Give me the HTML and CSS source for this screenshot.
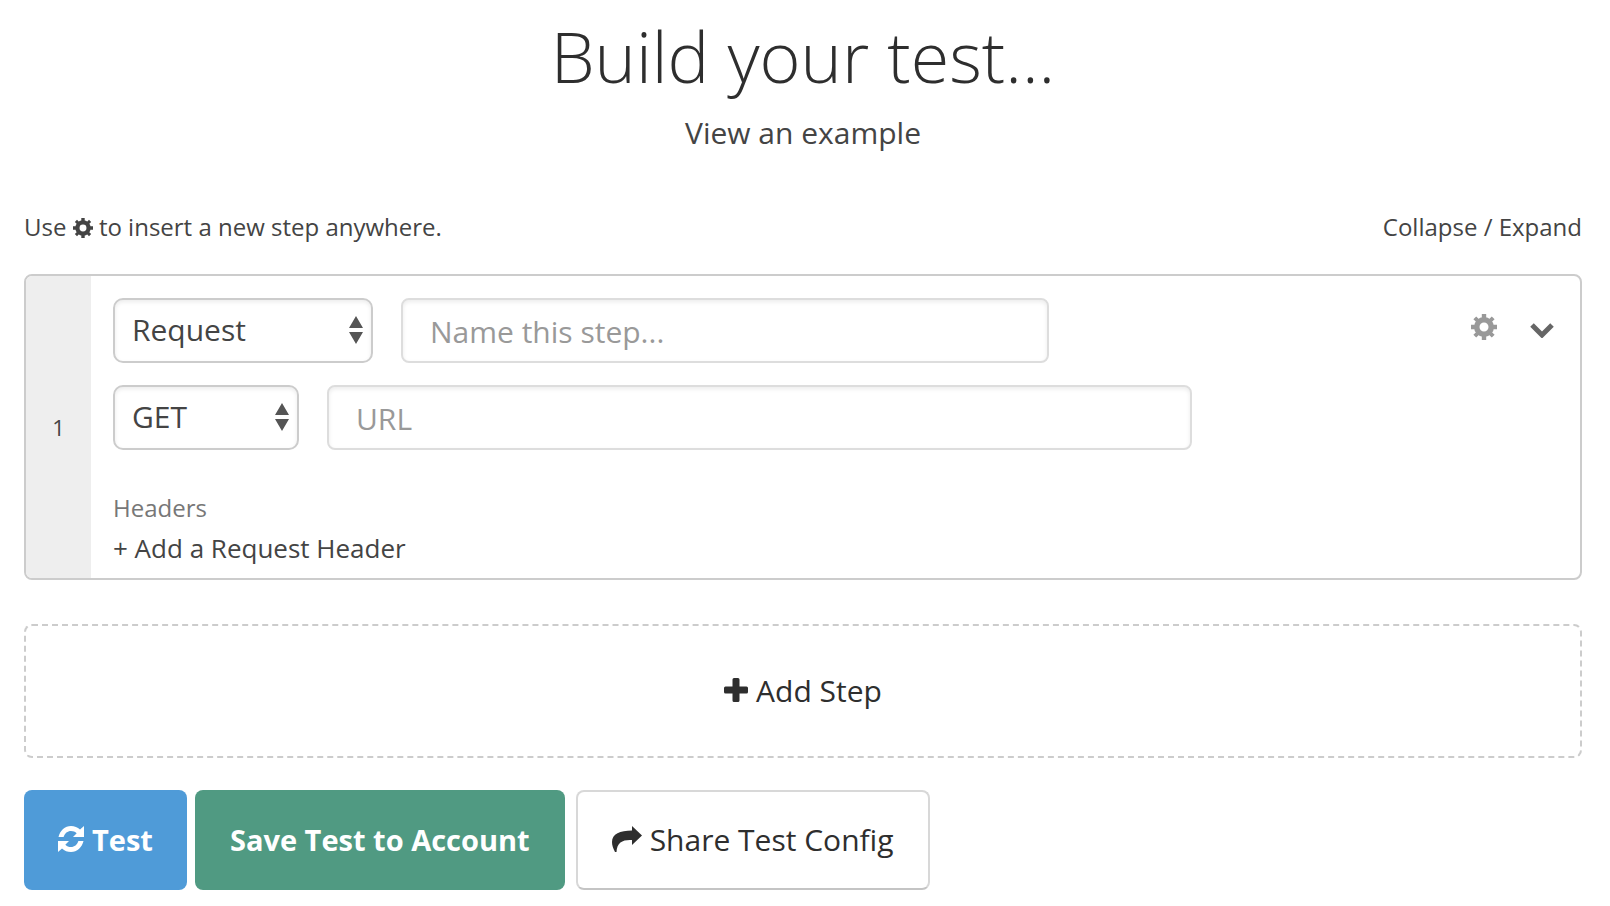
FILE: index.html
```html
<!DOCTYPE html>
<html lang="en">
<head>
<meta charset="UTF-8" />
<meta name="viewport" content="width=device-width, initial-scale=1" />
<title>Build your test</title>
<link rel="stylesheet" href="styles.css">
</head>
<body>
<svg class="sprite" aria-hidden="true">
  <symbol id="icon-cog" viewBox="0 0 26 26">
    <g fill="currentColor">
      <path fill-rule="evenodd" d="M13 3a10 10 0 1 0 0 20a10 10 0 1 0 0-20zM13 8.500a4.500 4.500 0 1 1 0 9a4.500 4.500 0 1 1 0-9z"/>
      <path d="M10.800 0h4.400v5h-4.400zM10.800 21h4.400v5h-4.400zM0 10.800h5v4.400h-5zM21 10.800h5v4.400h-5z"/>
      <path d="M2.400 5.200l2.800-2.800 3.400 3.400-2.800 2.800zM20.800 2.400l2.800 2.800-3.400 3.400-2.800-2.800zM2.400 20.800l2.800 2.800 3.400-3.400-2.800-2.800zM20.800 23.600l2.800-2.800-3.400-3.400-2.800 2.800z"/>
    </g>
  </symbol>
</svg>

<main class="page">
  <header class="intro">
    <h1>Build your test...</h1>
    <a class="example-link" href="#">View an example</a>
  </header>

  <div class="toolbar">
    <p>Use <svg class="icon-inline"><use href="#icon-cog"/></svg> to insert a new step anywhere.</p>
    <p><a href="#">Collapse</a> / <a href="#">Expand</a></p>
  </div>

  <form class="builder">
    <section class="step">
      <div class="step-number">1</div>
      <div class="step-body">
        <div class="row">
          <span class="select select-type">
            <select aria-label="Step type">
              <option>Request</option>
            </select>
            <svg class="arrows" viewBox="0 0 14 28"><path d="M7 0l7 12H0zM7 28l7-12H0z" fill="#555"/></svg>
          </span>
          <input class="input-name" type="text" placeholder="Name this step..." aria-label="Step name">
          <div class="step-actions">
            <button type="button" class="icon-button" aria-label="Step settings"><svg class="icon-cog"><use href="#icon-cog"/></svg></button>
            <button type="button" class="icon-button" aria-label="Collapse step">
              <svg class="icon-chevron" viewBox="0 0 24 22"><path d="M2 9l10 10L22 9" fill="none" stroke="#666" stroke-width="5"/></svg>
            </button>
          </div>
        </div>
        <div class="row">
          <span class="select select-method">
            <select aria-label="Method">
              <option>GET</option>
            </select>
            <svg class="arrows" viewBox="0 0 14 28"><path d="M7 0l7 12H0zM7 28l7-12H0z" fill="#555"/></svg>
          </span>
          <input class="input-url" type="text" placeholder="URL" aria-label="URL">
        </div>
        <div class="headers">
          <h2>Headers</h2>
          <a href="#">+ Add a Request Header</a>
        </div>
      </div>
    </section>

    <button type="button" class="add-step">
      <svg class="icon-plus" viewBox="0 0 24 24"><path d="M10 0h4a1.500 1.500 0 0 1 1.500 1.500v7h7A1.500 1.500 0 0 1 24 10v4a1.500 1.500 0 0 1-1.500 1.500h-7v7A1.500 1.500 0 0 1 14 24h-4a1.500 1.500 0 0 1-1.500-1.500v-7h-7A1.500 1.500 0 0 1 0 14v-4a1.500 1.500 0 0 1 1.500-1.500h7v-7A1.500 1.500 0 0 1 10 0z" fill="currentColor"/></svg>
      Add Step
    </button>

    <div class="actions">
      <button type="button" class="btn btn-test">
        <svg class="icon-refresh" viewBox="0 0 26 26"><path d="M0.500 11C2 4.500 7 0 13 0c3.500 0 6.500 1.300 9 3.600L26 0v11H15l3.700-3.700C17.200 5.800 15.200 5 13 5c-3.500 0-6.200 2.200-7.400 6zM25.500 15C24 21.500 19 26 13 26c-3.500 0-6.500-1.300-9-3.600L0 26V15h11l-3.700 3.700C8.800 20.200 10.800 21 13 21c3.500 0 6.200-2.200 7.400-6z" fill="currentColor"/></svg>
        Test
      </button>
      <button type="button" class="btn btn-save">Save Test to Account</button>
      <button type="button" class="btn btn-share">
        <svg class="icon-share" viewBox="0 0 30 26"><path d="M20 0l10 9.500L20 19v-5C11 13.500 5 16 4.500 26H3C1 22 0 19.500 0 16C0 8 8 4.500 20 4.500z" fill="currentColor"/></svg>
        Share Test Config
      </button>
    </div>
  </form>
</main>
</body>
</html>
```
FILE: styles.css
```css
* {
  box-sizing: border-box;
}
body {
  margin: 0;
  background: #fff;
  color: #444;
  font-family: 'Open Sans', sans-serif;
  font-size: 24px;
  line-height: 32px;
}
h1, h2, p {
  margin: 0;
  font-weight: 400;
}
a {
  color: inherit;
  text-decoration: none;
}
button, input, select {
  font-family: inherit;
  color: inherit;
}
button {
  cursor: pointer;
}
.sprite {
  display: none;
}
.page {
  padding: 8px 28px 16px 24px;
}

/* Heading */
.intro {
  text-align: center;
}
.intro h1 {
  color: #2e2e2e;
  font-size: 70px;
  font-weight: 300;
  line-height: 96px;
}
.example-link {
  display: block;
  margin-top: 9px;
  color: #444;
  font-size: 30px;
  line-height: 40px;
}
.toolbar {
  display: flex;
  justify-content: space-between;
  margin-top: 58px;
}
.icon-inline {
  width: 20px;
  height: 20px;
  vertical-align: -2px;
}

/* Step */
.step {
  display: flex;
  margin-top: 31px;
  border: 2px solid #ccc;
  border-radius: 8px;
  overflow: hidden;
}
.step-number {
  display: flex;
  align-items: center;
  justify-content: center;
  width: 65px;
  background: #eee;
  font-size: 22px;
}
.step-body {
  flex: 1;
  padding: 22px 26px 10px 22px;
}
.row {
  display: flex;
  align-items: center;
  gap: 28px;
  margin-bottom: 22px;
}
.select {
  position: relative;
}
.select select {
  width: 100%;
  height: 65px;
  padding: 0 17px 2px;
  border: 2px solid #ccc;
  border-radius: 10px;
  background: #fff;
  box-shadow: inset 0 2px 4px rgba(0,0,0,0.08);
  font-size: 30px;
  appearance: none;
}
.arrows {
  position: absolute;
  top: 18px;
  right: 10px;
  width: 14px;
  height: 28px;
  pointer-events: none;
}
.select-type {
  width: 260px;
}
.select-method {
  width: 186px;
}
.row input {
  height: 65px;
  padding: 2px 27px 0;
  border: 2px solid #ddd;
  border-radius: 8px;
  box-shadow: inset 0 2px 4px rgba(0,0,0,0.08);
  font-size: 30px;
}
.row input::placeholder {
  color: #999;
}
.input-name {
  width: 45%;
}
.input-url {
  width: 60%;
}
.step-actions {
  display: flex;
  align-items: center;
  gap: 33px;
  margin-left: auto;
  padding-bottom: 8px;
}
.icon-button {
  display: flex;
  padding: 0;
  border: 0;
  background: none;
}
.icon-cog {
  width: 26px;
  height: 26px;
  color: #999;
}
.icon-chevron {
  width: 24px;
  height: 22px;
}
.headers {
  margin-top: 42px;
}
.headers h2 {
  color: #777;
  font-size: 24px;
  line-height: 32px;
}
.headers a {
  display: block;
  margin-top: 4px;
  font-size: 26px;
  line-height: 40px;
}

/* Buttons */
.add-step {
  display: flex;
  align-items: center;
  justify-content: center;
  gap: 8px;
  width: 100%;
  height: 134px;
  margin-top: 44px;
  padding: 0 0 2px;
  border: 2px dashed #ccc;
  border-radius: 8px;
  background: #fff;
  color: #2e2e2e;
  font-size: 30px;
}
.icon-plus {
  width: 24px;
  height: 24px;
}
.actions {
  display: flex;
  margin-top: 32px;
}
.btn {
  display: flex;
  align-items: center;
  gap: 8px;
  height: 100px;
  padding: 0 34px 2px;
  border: 0;
  border-radius: 8px;
  color: #fff;
  font-size: 30px;
}
.btn-test,
.btn-save {
  font-size: 29px;
  font-weight: 700;
}
.btn-test {
  background: #4f9bd8;
}
.btn-save {
  margin-left: 8px;
  padding: 0 35px 2px;
  background: #509a82;
}
.btn-share {
  margin-left: 11px;
  border: 2px solid #d8d8d8;
  border-bottom-color: #c4c4c4;
  background: #fff;
  color: #2e2e2e;
}
.icon-refresh {
  width: 26px;
  height: 26px;
}
.icon-share {
  width: 30px;
  height: 26px;
}
```
